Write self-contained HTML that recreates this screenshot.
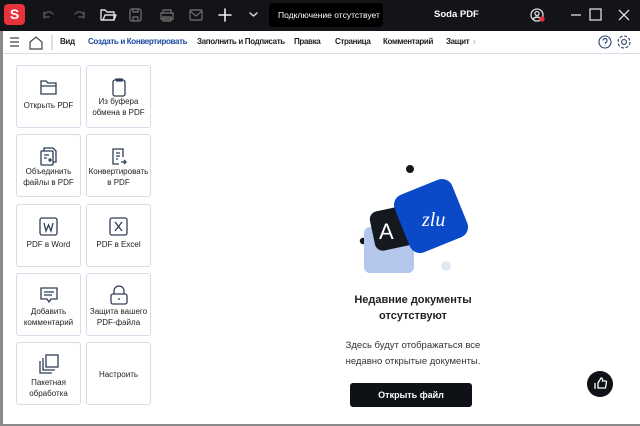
<!DOCTYPE html><html><head><meta charset="utf-8"><style>
*{margin:0;padding:0;box-sizing:border-box}
body{width:640px;height:426px;overflow:hidden;background:#fff;font-family:"Liberation Sans",sans-serif;position:relative}
.top{position:absolute;left:0;top:0;width:640px;height:31px;background:#121418}
.tb{position:absolute;left:0;top:31px;width:640px;height:23px;background:#fff;border-bottom:1px solid #d6dde8}
.tb span{position:absolute;top:6px;font-size:8px;color:#222;font-weight:bold;letter-spacing:-.35px;white-space:nowrap}
.tile{position:absolute;width:65px;height:63px;border:1px solid #d5dde8;border-radius:3px;background:#fff;text-align:center;font-size:8px;color:#222;line-height:11px}
.tile svg{position:absolute;left:21px;top:10px}
.tile div{position:absolute;left:0;right:0}
.frame{position:absolute;left:0;top:31px;width:3px;height:395px;background:#8a8a8a}
</style></head><body>
<div class="top">
 <div style="position:absolute;left:4px;top:4px;width:21px;height:21px;background:#e8323c;border-radius:4px;color:#fff;font-size:14px;font-weight:bold;text-align:center;line-height:21px">S</div>
 <svg width="260" height="31" style="position:absolute;left:30px;top:0" fill="none" stroke-width="1.4" stroke-linecap="round" stroke-linejoin="round">
  <path d="M14 18 a5 5 0 0 1 9 -4 M14 12 v5 h5" stroke="#555"/>
  <path d="M54 18 a5 5 0 0 0 -9 -4 M54 12 v5 h-5" stroke="#555"/>
  <path d="M71 10 h4 l2 2 h7 v8 h-13z M73 20 l2 -5 h11 l-2 5" stroke="#ddd"/>
  <rect x="100" y="9" width="11" height="12" rx="2" stroke="#666"/><path d="M103 9 v3 h5 v-3 M103 21 v-4 h5 v4" stroke="#666"/>
  <path d="M131 13 h12 v6 h-12z M133 13 v-3 h8 v3 M133 17 h8 v4 h-8z" stroke="#666"/>
  <rect x="160" y="10" width="12" height="10" rx="1" stroke="#666"/><path d="M160 11 l6 5 l6 -5" stroke="#666"/>
  <path d="M195 9 v12 M189 15 h12" stroke="#eee" stroke-width="1.6"/>
  <path d="M220 13 l3.5 3 l3.5 -3" stroke="#ddd"/>
 </svg>
 <div style="position:absolute;left:269px;top:3px;width:114px;height:24px;background:#000;border-radius:4px;color:#fff;font-size:8.5px;line-height:24px;padding-left:9px;white-space:nowrap">Подключение отсутствует</div>
 <div style="position:absolute;left:434px;top:9px;color:#fff;font-size:9.5px;font-weight:bold">Soda PDF</div>
 <svg width="120" height="31" style="position:absolute;left:520px;top:0" fill="none" stroke="#ddd" stroke-width="1.3">
  <circle cx="17" cy="15" r="6"/><circle cx="17" cy="13.5" r="2"/><path d="M13 19 q4 -4 8 0"/><circle cx="22" cy="19" r="2.6" fill="#e8323c" stroke="none"/>
  <path d="M51 15 h10"/><rect x="70" y="9" width="11" height="11"/><path d="M99 10 l10 10 M109 10 l-10 10"/>
 </svg>
</div>
<div class="tb">
 <svg width="60" height="23" style="position:absolute;left:0;top:0" fill="none" stroke="#444" stroke-width="1.2"><path d="M10 7 h9 M10 11 h9 M10 15 h9"/><path d="M30 11 l6 -5 l6 5 v7 h-12z"/><path d="M52 4 v15" stroke="#ccc"/></svg>
 <span style="left:60px">Вид</span>
 <span style="left:88px;color:#1a4aa0">Создать и Конвертировать</span>
 <span style="left:197px">Заполнить и Подписать</span>
 <span style="left:294px">Правка</span>
 <span style="left:335px">Страница</span>
 <span style="left:383px">Комментарий</span>
 <span style="left:446px">Защит</span><span style="left:473px;color:#999;font-weight:normal">›</span>
 <svg width="40" height="23" style="position:absolute;left:596px;top:0" fill="none" stroke="#2a3f6a" stroke-width="1.1"><circle cx="9" cy="11" r="6"/><path d="M7 9.5 a2 2 0 1 1 2.5 2 v1.2 M9 14.5 v.5"/><circle cx="28" cy="11" r="2.4"/><circle cx="28" cy="11" r="6" stroke-dasharray="3 1.7"/></svg>
</div>
<div class="frame"></div>
<div style="position:absolute;left:0;top:424px;width:640px;height:2px;background:#8a8a8a"></div>

<div class="tile" style="left:16px;top:65px"><svg width="22" height="22" fill="none" stroke="#2e3d56" stroke-width="1.3"><path d="M3 5 h5 l2 2 h8 v11 h-15z M3 10 h15"/></svg><div style="top:34px">Открыть PDF</div></div>
<div class="tile" style="left:86px;top:65px"><svg width="22" height="22" fill="none" stroke="#2e3d56" stroke-width="1.3"><rect x="5" y="4" width="12" height="16" rx="2"/><path d="M8 4 v-1 h6 v2 h-6"/></svg><div style="top:30px">Из буфера<br>обмена в PDF</div></div>
<div class="tile" style="left:16px;top:134px"><svg width="22" height="22" fill="none" stroke="#2e3d56" stroke-width="1.3"><path d="M6 6 v-3 h9 l3 3 v11 h-3"/><rect x="3" y="6" width="12" height="14" rx="1"/><path d="M6 10 h5 M6 13 h3 M10 15 h4 M12 13 v4"/></svg><div style="top:31px">Объединить<br>файлы в PDF</div></div>
<div class="tile" style="left:86px;top:134px"><svg width="22" height="22" fill="none" stroke="#2e3d56" stroke-width="1.3"><path d="M15 12 v-8 h-10 v15 h6"/><path d="M8 8 h4 M8 11 h4 M8 14 h2 M13 17 h5 M16 15 l2 2 l-2 2"/></svg><div style="top:31px">Конвертировать<br>в PDF</div></div>
<div class="tile" style="left:16px;top:204px"><svg width="22" height="22" fill="none" stroke="#2e3d56" stroke-width="1.3"><rect x="2" y="3" width="17" height="17" rx="2"/><path d="M6 8 l2 8 l2.5 -6 l2.5 6 l2 -8"/></svg><div style="top:34px">PDF в Word</div></div>
<div class="tile" style="left:86px;top:204px"><svg width="22" height="22" fill="none" stroke="#2e3d56" stroke-width="1.3"><rect x="2" y="3" width="17" height="17" rx="2"/><path d="M7 7 l7 9 M14 7 l-7 9"/></svg><div style="top:34px">PDF в Excel</div></div>
<div class="tile" style="left:16px;top:273px"><svg width="22" height="22" fill="none" stroke="#2e3d56" stroke-width="1.3"><path d="M3 4 h16 v11 h-6 l-2 3 l-2 -3 h-6z M6 8 h10 M6 11 h8"/></svg><div style="top:32px">Добавить<br>комментарий</div></div>
<div class="tile" style="left:86px;top:273px"><svg width="22" height="22" fill="none" stroke="#2e3d56" stroke-width="1.3"><rect x="3" y="10" width="16" height="10" rx="2"/><path d="M6 10 v-3 a5 5 0 0 1 10 0 v3 M11 14 v2"/></svg><div style="top:32px">Защита вашего<br>PDF-файла</div></div>
<div class="tile" style="left:16px;top:342px"><svg width="22" height="22" fill="none" stroke="#2e3d56" stroke-width="1.3"><rect x="8" y="2" width="12" height="12"/><path d="M5 5 v12 h12 M2 8 v12 h12"/></svg><div style="top:34px">Пакетная<br>обработка</div></div>
<div class="tile" style="left:86px;top:342px"><div style="top:26px">Настроить</div></div>

<svg width="120" height="120" style="position:absolute;left:350px;top:160px">
 <circle cx="60" cy="9" r="4" fill="#14171c"/>
 <circle cx="13" cy="81" r="3.2" fill="#14171c"/>
 <circle cx="96" cy="106" r="5" fill="#e2e8f6"/>
 <rect x="14" y="67" width="50" height="46" rx="6" fill="#b4c6ec"/>
 <rect x="22" y="48" width="44" height="40" rx="8" fill="#14191f" transform="rotate(-12 44 68)"/>
 <text x="29" y="79" fill="#fff" font-size="22" font-family="Liberation Sans">A</text>
 <rect x="50" y="25" width="62" height="62" rx="11" fill="#0a4ac9" transform="rotate(-22 81 56)"/>
 <text x="72" y="66" fill="#fff" font-size="20" font-style="italic" font-family="Liberation Serif">zlu</text>
</svg>
<div style="position:absolute;left:320px;width:186px;top:292px;text-align:center;font-size:11px;font-weight:bold;color:#222;line-height:16px">Недавние документы<br>отсутствуют</div>
<div style="position:absolute;left:320px;width:186px;top:338px;text-align:center;font-size:9.5px;color:#333;line-height:16px">Здесь будут отображаться все<br>недавно открытые документы.</div>
<div style="position:absolute;left:350px;top:383px;width:122px;height:24px;background:#0e1116;border-radius:3px;color:#fff;font-size:9px;font-weight:bold;text-align:center;line-height:24px">Открыть файл</div>
<div style="position:absolute;left:587px;top:371px;width:26px;height:26px;border-radius:50%;background:#0e1116"></div>
<svg width="26" height="26" style="position:absolute;left:587px;top:371px" fill="none" stroke="#fff" stroke-width="1.3"><path d="M8 12 v6 M11 12 l3 -5 q2 0 1.5 3 h3 q1 0 1 1 l-1 6 h-7.5z"/></svg>
</body></html>
